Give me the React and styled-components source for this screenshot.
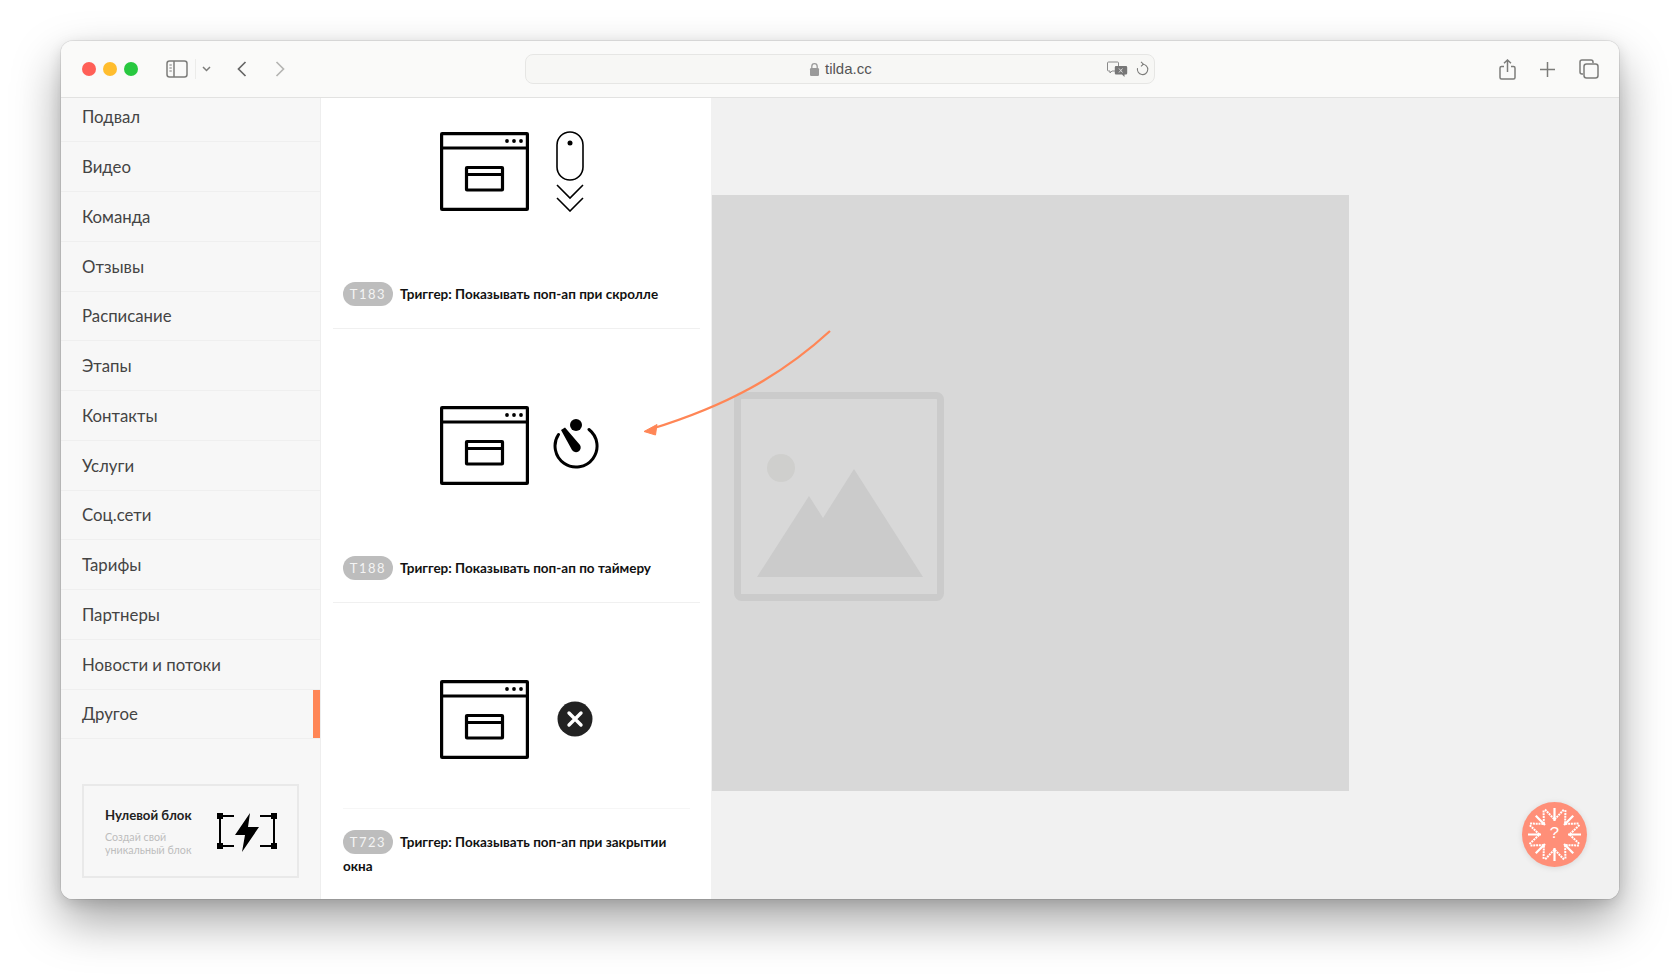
import React from "react";
import styled, { createGlobalStyle } from "styled-components";

const FONT = `Lato, "Noto Sans", "Liberation Sans", sans-serif`;

const sections = ["Подвал", "Видео", "Команда", "Отзывы", "Расписание", "Этапы", "Контакты", "Услуги", "Соц.сети", "Тарифы", "Партнеры", "Новости и потоки", "Другое"];

const Global = createGlobalStyle`
  html, body { margin: 0; padding: 0; background: #fff; }
  * { box-sizing: border-box; }
  body { font-family: ${FONT}; }
`;

const Page = styled.div`
  width: 1680px;
  height: 979px;
  padding: 41px 61px 80px;
  overflow: hidden;
`;

const Win = styled.div`
  position: relative;
  height: 858px;
  border-radius: 12px;
  overflow: hidden;
  background: #f1f1f1;
  display: flex;
  flex-direction: column;
`;

const WinShadow = styled.div`
  border-radius: 12px;
  box-shadow: 0 0 0 1px rgba(0,0,0,.08), 0 22px 48px rgba(0,0,0,.36), 0 4px 14px rgba(0,0,0,.12);
`;

const Toolbar = styled.header`
  flex: none;
  height: 57px;
  background: #fafaf9;
  border-bottom: 1px solid #e2e2e1;
  display: grid;
  grid-template-columns: 464px 630px 1fr;
  align-items: center;
  position: relative;
  z-index: 2;
`;

const ToolLeft = styled.div`
  display: flex;
  align-items: center;
  padding-left: 21px;
`;

const Lights = styled.div`
  display: flex;
  gap: 7px;
  margin-right: 28px;
`;

const Light = styled.span`
  width: 14px;
  height: 14px;
  border-radius: 50%;
  background: ${p => p.$color};
`;

const UrlBar = styled.div`
  height: 30px;
  margin-top: -1px;
  border: 1px solid #e6e6e4;
  border-radius: 8px;
  background: #f7f7f5;
  display: flex;
  align-items: center;
  padding-left: 283px;
  padding-right: 5px;
`;

const UrlText = styled.span`
  font: 15px "Liberation Sans", Arial, sans-serif;
  color: #555;
  margin-left: 5px;
  margin-right: auto;
`;

const ToolRight = styled.div`
  display: flex;
  justify-content: flex-end;
  align-items: center;
  gap: 24px;
  padding-right: 20px;
`;

const Body = styled.div`
  flex: 1;
  min-height: 0;
  display: flex;
`;

const Sidebar = styled.aside`
  flex: none;
  width: 260px;
  background: #f7f7f7;
  border-right: 1px solid #eeeeee;
  overflow: hidden;
`;

const SectionList = styled.ul`
  list-style: none;
  margin: -5.5px 0 0;
  padding: 0;
`;

const Section = styled.li`
  height: 49.75px;
  padding-left: 21px;
  display: flex;
  align-items: center;
  font-size: 16.8px;
  color: #444;
  border-bottom: 1px solid #efefef;
  box-shadow: ${p => (p.$active ? "inset -7px 0 0 #ff8656" : "none")};
`;

const ZeroCard = styled.div`
  margin: 44.5px 21px 0;
  width: 217px;
  height: 94px;
  border: 2px solid #e9e9e9;
  padding: 20px 20px 0 21px;
  display: flex;
  justify-content: space-between;
`;

const ZeroTitle = styled.div`
  font-size: 13.2px;
  font-weight: 700;
  color: #222;
  line-height: 18px;
`;

const ZeroNote = styled.div`
  font-size: 10.7px;
  line-height: 13px;
  color: #bdbdbd;
  margin-top: 6px;
`;

const Panel = styled.section`
  flex: none;
  width: 390px;
  background: #fff;
  padding: 0 11px 0 12px;
  overflow: hidden;
`;

const PanelScroll = styled.div`
  margin-top: -43px;
`;

const Card = styled.article`
  border-bottom: 1px solid #f0f0f0;
  padding-bottom: ${p => (p.$wrapped ? "21px" : "22px")};
`;

const Preview = styled.div`
  height: 206px;
  margin: 0 10px;
  padding: 77px 0 0 97px;
  display: flex;
  align-items: flex-start;
  gap: ${p => p.$gap}px;
  border-bottom: 1px solid ${p => (p.$rule ? "#f6f6f6" : "transparent")};
`;

const Caption = styled.div`
  margin-top: 21px;
  padding: 0 16px 0 10px;
  font-size: 13.5px;
  font-weight: 700;
  line-height: 24px;
  color: #111;
`;

const Tag = styled.span`
  display: inline-block;
  width: 50px;
  height: 24px;
  margin-right: 7px;
  border-radius: 12px;
  background: #bdbdbd;
  color: #f4f4f4;
  font-size: 13px;
  font-weight: 400;
  letter-spacing: 1.5px;
  text-align: center;
  vertical-align: top;
`;

const Stage = styled.main`
  flex: 1;
  min-width: 0;
  padding: 97px 0 0 1px;
`;

const Placeholder = styled.div`
  width: 637px;
  height: 596px;
  background: #d8d8d8;
  padding: 197px 0 0 22px;
`;

const ArrowLayer = styled.svg`
  position: absolute;
  left: 0;
  top: 0;
  pointer-events: none;
`;

const HelpButton = styled.button`
  position: absolute;
  right: 32px;
  bottom: 32px;
  width: 65px;
  height: 65px;
  padding: 0;
  border: 0;
  border-radius: 50%;
  background: #ff8f78;
  box-shadow: 0 1px 6px rgba(0,0,0,.1);
`;

const HelpMark = styled.span`
  position: absolute;
  left: 0;
  right: 0;
  top: 22px;
  text-align: center;
  font: 400 17px/20px "Liberation Mono", monospace;
  color: #fff;
`;

const ToolIcon = ({ w, h, vb, children, style }) => (
  <svg width={w} height={h} viewBox={vb} fill="none" stroke="#7c7c7a" strokeWidth="1.5" style={style}>{children}</svg>
);

const SidebarIcon = () => (
  <ToolIcon w={22} h={18} vb="0 0 22 18">
    <rect x="1" y="1" width="20" height="16" rx="2.5" />
    <path d="M8 1v16" />
    <path d="M3.4 5h2.4M3.4 8h2.4M3.4 11h2.4" strokeWidth="1" />
  </ToolIcon>
);

const Chevrons = () => (
  <>
    <svg width="1" height="20" style={{ margin: "0 6px 0 7px" }}><rect width="1" height="20" fill="#ececea" /></svg>
    <ToolIcon w={9} h={6} vb="0 0 9 6" style={{ marginRight: 26 }}><path d="M1 1l3.5 3.5L8 1" /></ToolIcon>
    <ToolIcon w={10} h={16} vb="0 0 10 16" style={{ marginRight: 28 }}><path d="M8.5 1L1.5 8l7 7" strokeWidth="1.7" stroke="#666" /></ToolIcon>
    <ToolIcon w={10} h={16} vb="0 0 10 16"><path d="M1.5 1l7 7-7 7" strokeWidth="1.7" stroke="#b5b5b3" /></ToolIcon>
  </>
);

const LockIcon = () => (
  <svg width="11" height="14" viewBox="0 0 11 14">
    <path d="M2.8 7V4.4a2.7 2.7 0 015.4 0V7" fill="none" stroke="#9a9a9a" strokeWidth="1.3" />
    <rect x="1" y="6" width="9" height="8" rx="1.3" fill="#9a9a9a" />
  </svg>
);

const TranslateIcon = () => (
  <svg width="21" height="16" viewBox="0 0 21 16">
    <path d="M1.5 1h9a1 1 0 011 1v7a1 1 0 01-1 1H5l-2 2v-2H1.5a1 1 0 01-1-1V2a1 1 0 011-1z" fill="#f7f7f5" stroke="#8a8a8a" />
    <path d="M9 5h10a1.2 1.2 0 011.2 1.2v6a1.2 1.2 0 01-1.2 1.2h-1.5V16l-2.5-2.6H9a1.2 1.2 0 01-1.2-1.2v-6A1.2 1.2 0 019 5z" fill="#777" />
    <path d="M12 7.5l3.5 4M15.500 7.5l-3.5 4" stroke="#ddd" strokeWidth="1" />
  </svg>
);

const ReloadIcon = () => (
  <ToolIcon w={13} h={16} vb="0 0 13 16" style={{ marginLeft: 8 }}>
    <path d="M6.500 3.2a5.2 5.2 0 11-5 4" strokeWidth="1.1" />
    <path d="M5 .8l2.4 2.4L5 5.4" strokeWidth="1.1" />
  </ToolIcon>
);

const ShareIcon = () => (
  <ToolIcon w={17} h={21} vb="0 0 17 21">
    <path d="M5 7.5H2.5a1.5 1.5 0 00-1.5 1.5v9.5A1.5 1.5 0 002.5 20h12a1.5 1.5 0 001.5-1.5V9a1.5 1.5 0 00-1.5-1.5H12" />
    <path d="M8.5 13V1M5 4.3L8.5 1 12 4.3" />
  </ToolIcon>
);

const PlusIcon = () => (
  <ToolIcon w={15} h={15} vb="0 0 15 15"><path d="M7.5 0v15M0 7.5h15" /></ToolIcon>
);

const TabsIcon = () => (
  <ToolIcon w={20} h={20} vb="0 0 20 20">
    <path d="M4 15H3a2 2 0 01-2-2V3a2 2 0 012-2h9a2 2 0 012 2v1" />
    <rect x="5" y="5" width="14" height="14" rx="2.5" />
  </ToolIcon>
);

const WindowArt = () => (
  <svg width="89" height="79" viewBox="0 0 89 79" fill="none" stroke="#000" strokeWidth="3.2">
    <rect x="1.6" y="1.6" width="85.8" height="75.8" rx=".5" />
    <path d="M1.5 16h86" />
    <circle cx="67" cy="9" r="1.9" fill="#000" stroke="none" />
    <circle cx="74" cy="9" r="1.9" fill="#000" stroke="none" />
    <circle cx="81" cy="9" r="1.9" fill="#000" stroke="none" />
    <rect x="26.5" y="35.500" width="36" height="22.5" rx=".5" />
    <path d="M26.5 42.500h36" />
  </svg>
);

const MouseArt = () => (
  <svg width="28" height="81" viewBox="0 0 28 81" fill="none" stroke="#000" strokeWidth="1.6" style={{ marginTop: -1 }}>
    <rect x="1" y="1" width="26" height="48" rx="13" />
    <circle cx="14" cy="12" r="2.5" fill="#000" stroke="none" />
    <path d="M1 54l13 13 13-13M1 67l13 13 13-13" />
  </svg>
);

const TimerArt = () => (
  <svg width="46" height="50" viewBox="0 0 46 50" fill="none" stroke="#000" style={{ marginTop: 13 }}>
    <path d="M5.500 15.500A21 21 0 1036 10.500" strokeWidth="3" strokeLinecap="round" />
    <circle cx="23" cy="6" r="6" fill="#000" stroke="none" />
    <path d="M8 11l4-2.500L27 26a4.700 4.700 0 01-8 5z" fill="#000" stroke="none" />
  </svg>
);

const CloseArt = () => (
  <svg width="36" height="36" viewBox="0 0 36 36" style={{ marginTop: 21 }}>
    <circle cx="18" cy="18" r="17.500" fill="#222" />
    <path d="M12 12l12 12M24 12L12 24" stroke="#fff" strokeWidth="3.4" strokeLinecap="round" />
  </svg>
);

const ZeroArt = () => (
  <svg width="60" height="39" viewBox="0 0 60 39" style={{ marginTop: 7 }}>
    <g stroke="#000" strokeWidth="2" fill="none">
      <path d="M3 3h14M43 3h14M3 33h14M43 33h14M3 3v30M57 3v30" />
    </g>
    <g fill="#000">
      <rect width="6" height="6" />
      <rect x="54" width="6" height="6" />
      <rect y="30" width="6" height="6" />
      <rect x="54" y="30" width="6" height="6" />
      <path d="M33 0L18 22h10l-3 17 17-25H31z" />
    </g>
  </svg>
);

const ImageMark = () => (
  <svg width="210" height="209" viewBox="0 0 210 209">
    <rect x="3.500" y="3.500" width="203" height="202" rx="4" fill="none" stroke="#cbcbcb" strokeWidth="7" />
    <circle cx="47" cy="76" r="14" fill="#cfcfcd" />
    <path d="M23 185L75 104l14 22 31-49 69 108z" fill="#cbcbcb" />
  </svg>
);

const Snowflake = () => {
  const arms = [0, 45, 90, 135, 180, 225, 270, 315];
  return (
    <svg width="65" height="65" viewBox="0 0 65 65" fill="none" stroke="#fff" style={{ display: "block" }}>
      {arms.map(a => (
        <g key={a} transform={`rotate(${a} 32.500 32.500)`}>
          <path d="M32.500 6v13" strokeWidth="2.2" />
          <path d="M23 7.500l9.500 10 9.500-10" strokeWidth="2" strokeDasharray="2 .8" />
        </g>
      ))}
    </svg>
  );
};

const cards = [
  { code: "T183", title: "Триггер: Показывать поп-ап при скролле", art: <MouseArt />, gap: 27 },
  { code: "T188", title: "Триггер: Показывать поп-ап по таймеру", art: <TimerArt />, gap: 24 },
  { code: "T723", title: "Триггер: Показывать поп-ап при закрытии окна", art: <CloseArt />, gap: 28, rule: true, wrapped: true },
];

export default function App() {
  return (
    <Page>
      <Global />
      <WinShadow>
        <Win>
          <Toolbar>
            <ToolLeft>
              <Lights>
                <Light $color="#ff5f57" />
                <Light $color="#ffbd2e" />
                <Light $color="#28c840" />
              </Lights>
              <SidebarIcon />
              <Chevrons />
            </ToolLeft>
            <UrlBar>
              <LockIcon />
              <UrlText>tilda.cc</UrlText>
              <TranslateIcon />
              <ReloadIcon />
            </UrlBar>
            <ToolRight>
              <ShareIcon />
              <PlusIcon />
              <TabsIcon />
            </ToolRight>
          </Toolbar>
          <Body>
            <Sidebar>
              <SectionList>
                {sections.map(name => (
                  <Section key={name} $active={name === "Другое"}>{name}</Section>
                ))}
              </SectionList>
              <ZeroCard>
                <div>
                  <ZeroTitle>Нулевой блок</ZeroTitle>
                  <ZeroNote>Создай свой<br />уникальный блок</ZeroNote>
                </div>
                <ZeroArt />
              </ZeroCard>
            </Sidebar>
            <Panel>
              <PanelScroll>
                {cards.map(c => (
                  <Card key={c.code} $wrapped={c.wrapped}>
                    <Preview $gap={c.gap} $rule={c.rule}>
                      <WindowArt />
                      {c.art}
                    </Preview>
                    <Caption><Tag>{c.code}</Tag>{c.title}</Caption>
                  </Card>
                ))}
              </PanelScroll>
            </Panel>
            <Stage>
              <Placeholder>
                <ImageMark />
              </Placeholder>
            </Stage>
          </Body>
          <ArrowLayer width="1558" height="858" viewBox="0 0 1558 858" fill="none">
            <path d="M769 290C720 335 665 365 590 388" stroke="#ff8656" strokeWidth="2.3" />
            <path d="M583 390.500l13-7-1.500 10.500z" fill="#ff8656" stroke="#ff8656" strokeWidth="1" />
          </ArrowLayer>
          <HelpButton aria-label="help">
            <Snowflake />
            <HelpMark>?</HelpMark>
          </HelpButton>
        </Win>
      </WinShadow>
    </Page>
  );
}
